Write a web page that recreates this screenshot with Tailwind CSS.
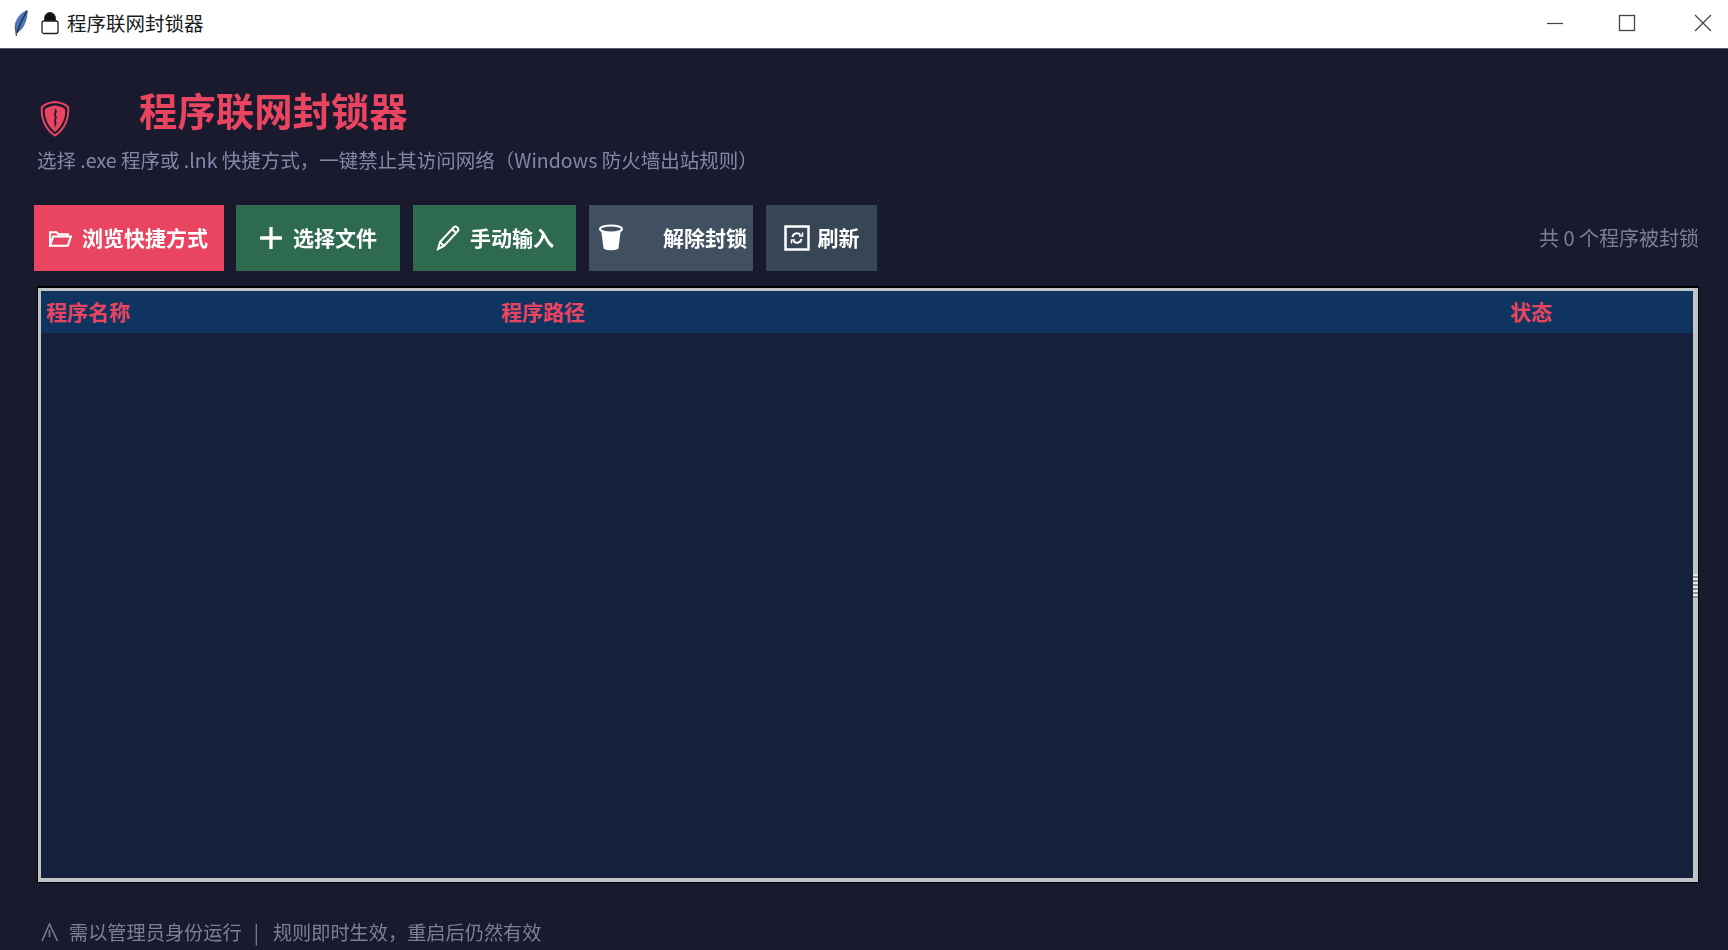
<!DOCTYPE html>
<html>

<head>
    <title>程序联网封锁器</title>
    <meta charset="utf-8" />
    <script src="https://cdn.jsdelivr.net/npm/@tailwindcss/browser@4"></script>
</head>

<body class="h-[950px] w-[1728px] overflow-hidden bg-[#1a1a2e] font-['Noto_Sans_CJK_SC','Liberation_Sans',sans-serif] blur-[0.5px]">
    <!-- title bar -->
    <div class="flex h-[49px] items-center border-b border-b-[#5a5f70] bg-white pb-[3px] pl-[12px] text-[#1a1a1a]">
        <svg class="h-[28px] w-[18px]" viewBox="0 0 18 28">
            <path d="M15.500 1C9 3 3 10 2.500 18L5 24C11 21 16 12 15.500 1Z" fill="#4a76b8" />
            <path d="M15 2C12 7 8 14 5 24" stroke="#22365c" stroke-width="1.500" fill="none" />
            <path d="M3.500 18L4.500 27" stroke="#555" stroke-width="1.500" />
        </svg>
        <svg class="ml-[11px] h-[24px] w-[18px]" viewBox="0 0 18 24">
            <path d="M3.500 10V7.500C3.500 4 6 1.500 9 1.500S14.500 4 14.500 7.500V10Z" fill="#111" stroke="#333" />
            <rect x="1" y="10" width="16" height="12.500" rx="2" fill="#fff" stroke="#222" stroke-width="1.300" />
        </svg>
        <span class="ml-[8px] text-[19.500px] leading-none">程序联网封锁器</span>
        <div class="ml-auto flex items-center pr-[16px]">
            <svg class="h-[18px] w-[18px]" viewBox="0 0 18 18"><path d="M1 9.500H17" stroke="#444" stroke-width="1.200" /></svg>
            <svg class="ml-[54px] h-[18px] w-[18px]" viewBox="0 0 18 18"><rect x="1.500" y="1.500" width="15" height="15" fill="none" stroke="#444" stroke-width="1.300" /></svg>
            <svg class="ml-[58px] h-[18px] w-[18px]" viewBox="0 0 18 18"><path d="M1 1L17 17M17 1L1 17" stroke="#444" stroke-width="1.200" /></svg>
        </div>
    </div>

    <div class="flex h-[901px] flex-col pl-[34px] pr-[29px]">
        <!-- heading -->
        <div class="mt-[40px] flex h-[40px] items-center">
            <svg class="mt-[18px] ml-[6px] h-[37px] w-[30px]" viewBox="0 0 30 37">
                <path d="M15 2C20 2.500 25 4 28 7C29.500 17 25 29 15 35.500C5 29 0.500 17 2 7C5 4 10 2.500 15 2Z" fill="none" stroke="#e94560" stroke-width="2" />
                <path d="M15 5.500C19 6 22.500 7 25 9C26 17 22.500 26 15 32C7.500 26 4 17 5 9C7.500 7 11 6 15 5.500Z" fill="#e94560" />
                <path d="M15.500 8L17 12L15.500 14L17 18L15.500 20L16.500 23L15 28L14 20L15 18L14 14Z" fill="#1a1a2e" />
            </svg>
            <h1 class="ml-[69px] text-[38.400px] leading-none font-bold text-[#e94560]">程序联网封锁器</h1>
        </div>
        <p class="mt-[18px] ml-[3px] h-[26px] text-[19.500px] leading-[26px] text-[#8088a8]">选择 .exe 程序或 .lnk 快捷方式，一键禁止其访问网络（Windows 防火墙出站规则）</p>

        <!-- toolbar -->
        <div class="mt-[32px] flex h-[66px] items-stretch text-[21px] font-bold text-white">
            <button class="flex w-[190px] items-center justify-center gap-[9px] bg-[#e94560]">
                <svg class="-ml-[2px] h-[21px] w-[25px]" viewBox="0 0 24 20" fill="none" stroke="#fff" stroke-width="2">
                    <path d="M2 17V4H8L10 6H19V8" />
                    <path d="M2 17L5 8H22L19 17Z" />
                </svg>
                <span>浏览快捷方式</span>
            </button>
            <button class="ml-[12px] flex w-[164px] items-center justify-center gap-[10px] bg-[#2d6a4f]">
                <svg class="h-[24px] w-[24px]" viewBox="0 0 22 22"><path d="M11 1V21M1 11H21" stroke="#fff" stroke-width="3" /></svg>
                <span>选择文件</span>
            </button>
            <button class="ml-[13px] flex w-[163px] items-center justify-center gap-[9px] bg-[#2d6a4f]">
                <svg class="h-[28px] w-[26px]" viewBox="0 0 26 28" fill="none" stroke="#fff" stroke-width="2">
                    <path d="M3 25L5 18L19 3C21 1.500 24.500 4.500 23 7L9 22Z" />
                    <path d="M5 18L9 22M17 5L21 9" />
                </svg>
                <span>手动输入</span>
            </button>
            <button class="ml-[13px] flex w-[164px] items-center justify-between bg-[#415060] pr-[6px] pl-[9px]">
                <svg class="h-[28px] w-[26px]" viewBox="0 0 26 28">
                    <path d="M3 5L5.500 24C6 27 20 27 20.500 24L23 5Z" fill="#fff" />
                    <ellipse cx="13" cy="5" rx="11" ry="3.500" fill="#415060" stroke="#fff" stroke-width="2" />
                </svg>
                <span>解除封锁</span>
            </button>
            <button class="ml-[13px] flex w-[111px] items-center justify-center gap-[8px] bg-[#374654]">
                <svg class="h-[26px] w-[26px]" viewBox="0 0 26 26" fill="none" stroke="#fff">
                    <rect x="1.500" y="1.500" width="23" height="23" stroke-width="2.500" />
                    <path d="M8.500 12A4.500 4.500 0 0 1 16.500 10M17.500 14A4.500 4.500 0 0 1 9.500 16" stroke-width="2" />
                    <path d="M15 11H18.500V7.500M11 15H7.500V18.500" stroke-width="1.500" />
                </svg>
                <span>刷新</span>
            </button>
            <span class="ml-auto self-center text-[20px] font-normal text-[#7b8099]">共 0 个程序被封锁</span>
        </div>

        <!-- table -->
        <div class="relative mt-[15px] ml-[3px] h-[597px] border-t-2 border-r border-b border-l border-black">
            <div class="flex h-full flex-col border-t-[3px] border-r-[5px] border-b-[4px] border-l-[3px] border-[#c2c5c8] bg-[#16213e]">
                <div class="grid h-[42px] shrink-0 grid-cols-[455px_1009px_1fr] items-center bg-[#0f3460] pl-[5px] text-[21px] font-bold text-[#e94560]">
                    <span>程序名称</span>
                    <span>程序路径</span>
                    <span>状态</span>
                </div>
            </div>
            <div class="absolute top-[286px] right-0 h-[24px] w-[5px] bg-[repeating-linear-gradient(#e8e8e8_0_2px,#8a8d92_2px_4px)]"></div>
        </div>

        <!-- footer -->
        <div class="mt-[36px] ml-[7px] flex items-center text-[19.200px] leading-[26px] text-[#7b8099]">
            <svg class="h-[20px] w-[18px]" viewBox="0 0 18 20" fill="none" stroke="#7b8099" stroke-width="1.500">
                <path d="M1 19L8.500 2L16.500 19" />
                <path d="M8.500 8V15" />
            </svg>
            <span class="ml-[10px]">需以管理员身份运行</span>
            <span class="ml-[12px]">|</span>
            <span class="ml-[14px]">规则即时生效，重启后仍然有效</span>
        </div>
    </div>
</body>

</html>
